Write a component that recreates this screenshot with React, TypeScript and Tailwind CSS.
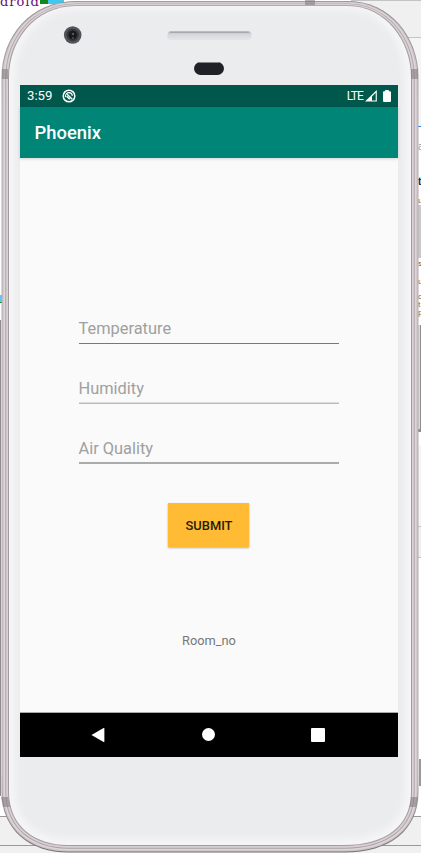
import React from "react";

const rim = (i: number) =>
  `M${1.5 + i} 77 C${1.5 + i} ${37 + i * 0.5} ${30 + i * 0.6} ${1 + i * 0.65} 76 ${1 + i * 0.65} H348 C${390 - i * 0.6} ${1 + i * 0.65} ${418.5 - i} ${37 + i * 0.5} ${418.5 - i} 77 V792 C${418.5 - i} ${830 - i * 0.5} ${390 - i * 0.6} ${852.5 - i} 344 ${852.5 - i} H68 C${30 + i * 0.6} ${852.5 - i} ${1.5 + i} ${830 - i * 0.5} ${1.5 + i} 792 Z`;

function Device() {
  return (
    <svg className="absolute inset-0" width="421" height="853" viewBox="0 0 421 853">
      <defs>
        <filter id="soft" x="-5%" y="-5%" width="110%" height="110%">
          <feGaussianBlur stdDeviation="3" />
        </filter>
        <clipPath id="face"><path d={rim(7.5)} /></clipPath>
        <linearGradient id="speaker" x1="0" y1="0" x2="0" y2="1">
          <stop offset="0" stopColor="#b4b9bf" />
          <stop offset="0.4" stopColor="#d6d8dc" />
          <stop offset="1" stopColor="#e4e5e8" />
        </linearGradient>
        <linearGradient id="edge" x1="0" y1="0" x2="0" y2="853" gradientUnits="userSpaceOnUse">
          <stop offset="0" stopColor="#8f878a" />
          <stop offset="0.12" stopColor="#b5adb0" />
          <stop offset="0.9" stopColor="#b5adb0" />
          <stop offset="1" stopColor="#776f74" />
        </linearGradient>
      </defs>
      <path d={rim(0)} fill="url(#edge)" />
      <path d={rim(1)} fill="#cdc5c8" />
      <path d={rim(2.2)} fill="#ddd5d8" />
      <path d={rim(3.8)} fill="#a9a2a5" />
      <path d={rim(4.7)} fill="#d8d0d3" />
      <path d={rim(6.5)} fill="#a39c9f" />
      <path d="M2 69h6v10H2zM411 69h7v10h-7zM305 0h10v5h-10zM1 797h7l2 10H3zM410 797h8l-2 10h-7z" fill="#857d80" fillOpacity=".6" />
      <path d={rim(7.5)} fill="#f5f5f7" />
      <g clipPath="url(#face)">
        <path d={rim(14)} fill="#ebecee" filter="url(#soft)" />
      </g>
      <circle cx="72.7" cy="35" r="8.8" fill="#51555a" />
      <circle cx="72.7" cy="35" r="6.2" fill="#33363b" />
      <circle cx="72.7" cy="35" r="4.2" fill="#16181c" />
      <circle cx="73" cy="34" r="1.3" fill="#535748" />
      <path d="M73 37v2" stroke="#746c32" />
      <rect x="167.5" y="31" width="84" height="9" rx="4" fill="url(#speaker)" />
      <path d="M170 32.5h79" stroke="#a5aab0" />
      <rect x="194" y="62" width="30" height="13" rx="6.5" fill="#202126" />
      <path d="M199 62.5h20" stroke="#84868a" />
    </svg>
  );
}

function Desktop() {
  return (
    <div className="absolute inset-0 flex flex-col bg-white">
      <div className="flex h-[816px] shrink-0 justify-between">
        <div className="flex w-[70px] flex-col">
          <div className="flex h-[295px] whitespace-pre font-['DejaVu_Serif',serif] text-[13px] leading-[4px] text-[#660e7a]">
            <span className="tracking-[1px]">droid</span>
            <div className="h-[4px] w-[8px] bg-[#138a17]" />
            <div className="h-[4px] w-[16px] bg-[#40c8ef]" />
          </div>
          <div className="h-[8px] w-[2px] border-b border-[#168225] bg-[#5fc6f3]" />
          <div className="mt-[17px] h-[476px] w-px bg-[#8f8b8d]" />
        </div>
        <div className="flex w-[70px] flex-col items-end font-['Liberation_Sans',sans-serif] text-[8px] leading-[8px] text-[#555]">
          <div className="h-[38px] w-full border-y border-[#c3c3c3] bg-[#f0f0f0]" />
          <div className="h-[89px] w-[20px] border-b border-[#2680e8] bg-[#f5f5f5]" />
          <div className="flex h-[78px] w-[3px] flex-col pt-[16px] text-[10px]">
            <span className="text-[#999]">a</span>
            <span className="mt-[27px] font-bold text-[#222]">t</span>
            <span className="mt-[11px] text-[8px]">u</span>
          </div>
          <div className="h-[53px] w-[3px] bg-[#c9cbcb]" />
          <div className="flex h-[67px] w-[3px] flex-col pt-[2px]">
            <span>s</span>
            <span className="mt-[10px]">u</span>
            <span className="mt-[7px]">o</span>
            <span>t</span>
            <span>p</span>
          </div>
          <div className="h-[107px] w-[3px] border-b-[3px] border-r border-[#8c908a] bg-[#d8dada]" />
          <div className="mt-[13px] h-[82px] w-[3px] border-b border-[#c3c3c3] bg-[#f5f5f5]" />
          <div className="h-[31px] w-[3px] border-b border-[#c3c3c3] bg-[#f0f0f0]" />
          <div className="mt-[201px] h-[27px] w-[2px] bg-[#999]" />
        </div>
      </div>
      <div className="h-[30px] shrink-0 border-y border-[#999] bg-[#f0f0f0]" />
      <div className="flex-1 bg-[#f0f0f0]" />
    </div>
  );
}

function Field({ label, line }: { label: string; line: string }) {
  return (
    <div className="flex h-[60px] w-[260px] flex-col">
      <div className="text-[16.4px] leading-[24px] text-[#a0a0a0]">{label}</div>
      <div className={line} />
    </div>
  );
}

export default function App() {
  return (
    <div className="relative h-[853px] w-[421px] overflow-hidden font-[Roboto,sans-serif]">
      <Desktop />
      <Device />
      <main className="relative ml-5 flex h-[757px] w-[378px] flex-col pt-[85px]">
        <header className="flex h-[22px] shrink-0 items-center bg-[#00574b] pl-[7px] pr-[7px] text-white">
          <span className="text-[13.2px] leading-[22px]">3:59</span>
          <svg className="ml-[10px]" width="14" height="14" viewBox="0 0 14 14" fill="none" stroke="white">
            <circle cx="7" cy="7" r="5.8" strokeWidth="1.5" />
            <path d="M3.4 8.1C3.1 5.3 4.9 3.5 7.2 3.6c1.8.1 3 1.5 3.2 3.3" strokeWidth="1.1" />
            <path d="M5.2 5.3 10.2 10.3M4.6 7.2 7.8 10.3" strokeWidth="1.5" />
          </svg>
          <span className="ml-auto text-[12px] leading-[22px] tracking-[-0.9px]">LTE</span>
          <svg className="ml-[2px]" width="12" height="12" viewBox="0 0 12 12" fill="white">
            <path fillRule="evenodd" d="M0 11.5 11.8 0v11.5ZM7 10.4h3.7V2.8L7 6.4Z" />
          </svg>
          <svg className="ml-[6px]" width="8" height="12" viewBox="0 0 8 12" fill="white">
            <path d="M2.2 0h3.6v1.2H7q1 0 1 1V11q0 1-1 1H1q-1 0-1-1V2.2q0-1 1-1h1.2Z" />
          </svg>
        </header>
        <h1 className="z-10 flex h-[51px] shrink-0 items-center bg-[#008577] pl-[14.5px] pt-px text-[18.4px] font-medium text-white shadow-[0_1px_3px_rgba(0,0,0,.15)]">Phoenix</h1>
        <section className="flex min-h-0 flex-1 flex-col bg-[#fafafa] pl-[58.5px] pt-[159px]">
          <Field label="Temperature" line="mt-[2px] h-px bg-[#777777]" />
          <Field label="Humidity" line="mt-px h-[2px] bg-[linear-gradient(#dddddd_50%,#bbbbbb_50%)]" />
          <Field label="Air Quality" line="mt-px h-[2px] bg-[#ababab]" />
          <button className="ml-[89.5px] mt-[6px] h-[44px] w-[81px] shrink-0 bg-[#ffbb33] pl-px pt-[2px] text-[12.9px] font-medium text-[#251c09] shadow-[0_1px_2px_rgba(0,0,0,.3)]">SUBMIT</button>
          <p className="ml-[103.5px] mt-[84px] text-[12.8px] leading-[20px] text-[#777]">Room_no</p>
        </section>
        <nav className="flex h-[45px] shrink-0 items-center justify-between border-t border-[#aaa] bg-black pb-px pl-[71px] pr-[73px]">
          <svg width="14" height="16" viewBox="0 0 15 16" fill="white"><path d="m.5 8 13-7.6q.8 0 .8.6v14q0 .6-.8.6Z" /></svg>
          <div className="size-[13px] rounded-full bg-white" />
          <div className="size-[14px] rounded-[1px] bg-white" />
        </nav>
      </main>
    </div>
  );
}
